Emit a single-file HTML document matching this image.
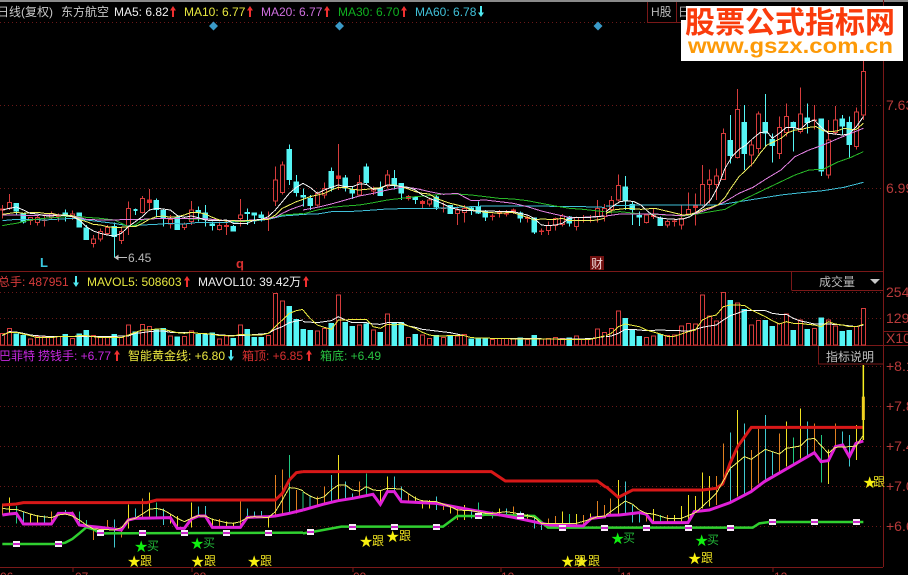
<!DOCTYPE html>
<html><head><meta charset="utf-8"><style>
html,body{margin:0;padding:0;background:#000;width:908px;height:575px;overflow:hidden}
svg{display:block;position:absolute;left:0;top:0;font-family:"Liberation Sans","Noto Sans CJK SC",sans-serif;font-size:12px}
path{vector-effect:non-scaling-stroke;fill:none}
.c path{shape-rendering:crispEdges}
.rw{stroke:#d63c3c}.rb{stroke:#d63c3c;fill:#000}.rf{stroke:#e03030;fill:#e03030}.cw{stroke:#55f5f5}.cb{stroke:#55f5f5;fill:#55f5f5;stroke-width:1.6}
.w,.y,.p,.g,.b,.vy,.vw,.Y{shape-rendering:crispEdges}
.w{stroke:#f4f4f4}.y{stroke:#f0f060}.p{stroke:#e080e0}.g{stroke:#28b828}.b{stroke:#40c0d8}
.vy{stroke:#ecec40}.vw{stroke:#f4f4f4}
.iy{stroke:#f0e020}.io{stroke:#e08020}.ic{stroke:#40c8d0}.ig{stroke:#20c880}
.R{stroke:#d81818;stroke-width:3}.M{stroke:#e020d8;stroke-width:3}.Y{stroke:#f0f060;stroke-width:1}.G{stroke:#30d030;stroke-width:2.5}
.ax{fill:#b83a3a;font-size:14px}
</style></head><body>
<svg width="908" height="575" viewBox="0 0 908 575">
<rect x="0" y="0" width="908" height="2" fill="#8a8a8a"/>
<!-- grid -->
<g stroke="#6a1818" stroke-dasharray="1 3" fill="none">
<path d="M0 22.5H883M0 105.5H883M0 188.5H883M0 292.5H883M0 318.5H883M0 366.5H883M0 406.5H883M0 446.5H883M0 486.5H883M0 526.5H883"/>
</g>
<g stroke="#7a1818" fill="none" shape-rendering="crispEdges">
<path d="M0 271.5H883M0 345.5H883M0 567.5H883M883.5 0V567M791.5 271V290M791.5 290.5H883M818.5 346V364H883M647.5 2V22M676.5 2V22M647 22.500H690M883 331.5H908M883 345.5H908M73 567V572M192 567V572M353 567V572M501 567V572M619 567V572M773 567V572"/>
</g>

<!-- main candles A -->
<g class="c" transform="translate(0,130) scale(.33333)">
<path class="rw" d="M7 225V265M28 192V240M91 265V285M112 255V287M133 258V290M154 245V268M175 250V275M217 242V270M280 315V352M301 295V335M322 285V315M364 290V342M385 215V315M427 198V250M448 177V240M511 255V295M553 278V300M574 213V285M658 275V302M679 275V315M721 207V290M805 245V303M826 110V228M847 95V193"/>
<path class="rb" d="M1 237h12V240h-12zM22 217h12V235h-12zM85 262h12V272h-12zM106 263h12V278h-12zM127 270h12V272h-12zM148 250h12V262h-12zM169 258h12V260h-12zM211 252h12V258h-12zM274 327h12V340h-12zM295 305h12V327h-12zM316 292h12V310h-12zM358 305h12V332h-12zM379 235h12V288h-12zM421 205h12V248h-12zM505 268h12V282h-12zM547 282h12V292h-12zM568 240h12V275h-12zM652 287h12V299h-12zM715 255h12V265h-12zM799 265h12V267h-12zM820 150h12V213h-12zM841 105h12V187h-12z"/>
<path class="rf" d="M442 210h12V217h-12zM673 287h12V289h-12z"/>
<path class="cw" d="M49 222V255M70 250V280M196 238V275M238 248V292M259 285V330M343 278V383M406 235V255M469 205V262M490 235V290M532 262V300M595 230V275M616 225V290M637 275V302M700 285V305M742 235V285M763 250V282M784 245V275M868 43V165M889 135V200"/>
<path class="cb" d="M43 222h12V242h-12zM64 253h12V275h-12zM190 250h12V252h-12zM232 250h12V290h-12zM253 295h12V327h-12zM337 290h12V318h-12zM400 240h12V240h-12zM463 213h12V237h-12zM484 243h12V262h-12zM526 262h12V298h-12zM589 243h12V245h-12zM610 250h12V268h-12zM631 283h12V286h-12zM694 290h12V302h-12zM736 248h12V250h-12zM757 250h12V254h-12zM778 256h12V262h-12zM862 60h12V147h-12zM883 157h12V187h-12z"/>
</g>
<!-- main candles B -->
<g class="c" transform="translate(303,130) scale(.33333)">
<path class="rw" d="M43 185V230M64 158V205M106 42V180M169 135V200M211 170V195M253 120V175M316 195V212M358 210V235M379 205V230M421 218V247M463 230V285M484 225V277M568 250V272M589 240V262M610 240V260M631 235V252M673 258V277M715 295V315M736 275V315M757 262V302M778 252V290M820 260V302M841 255V278M862 255V278M883 210V278M904 222V275"/>
<path class="rb" d="M37 190h12V225h-12zM58 175h12V195h-12zM163 157h12V195h-12zM205 178h12V183h-12zM247 135h12V168h-12zM310 200h12V205h-12zM373 210h12V222h-12zM415 235h12V236h-12zM457 240h12V250h-12zM478 235h12V247h-12zM730 287h12V302h-12zM751 265h12V287h-12zM772 258h12V283h-12zM814 262h12V290h-12zM877 235h12V260h-12zM898 235h12V260h-12z"/>
<path class="rf" d="M100 138h12V145h-12zM352 215h12V220h-12zM625 240h12V247h-12zM562 258h12V260h-12zM583 248h12V250h-12zM604 250h12V252h-12zM667 262h12V265h-12zM709 303h12V305h-12z"/>
<path class="cw" d="M1 175V230M22 195V240M85 112V185M127 135V185M148 170V207M190 100V162M232 155V198M274 120V178M295 160V210M337 198V222M400 195V240M442 225V252M505 228V255M526 215V252M547 240V273M652 245V278M694 262V312M799 258V290"/>
<path class="cb" d="M-5 197h12V200h-12zM16 207h12V225h-12zM79 125h12V173h-12zM121 145h12V173h-12zM142 180h12V188h-12zM184 112h12V157h-12zM226 175h12V195h-12zM268 147h12V165h-12zM289 162h12V188h-12zM331 202h12V207h-12zM394 202h12V230h-12zM436 228h12V250h-12zM499 235h12V238h-12zM520 232h12V248h-12zM541 245h12V260h-12zM646 250h12V263h-12zM688 265h12V305h-12zM793 262h12V278h-12z"/>
</g>
<!-- main candles C -->
<g class="c" transform="translate(606,70) scale(.33333)">
<path class="rw" d="M16 378V430M37 313V395M121 430V460M142 415V447M184 450V472M205 445V470M226 405V478M247 367V435M268 370V467M289 285V410M310 298V400M331 295V390M352 175V330M394 57V265M436 210V290M457 125V250M520 140V267M541 100V200M583 52V190M625 105V178M667 150V325M688 108V195M751 112V238M772 -30V150"/>
<path class="rb" d="M10 392h12V418h-12zM31 346h12V390h-12zM115 435h12V458h-12zM178 455h12V465h-12zM199 453h12V455h-12zM220 445h12V465h-12zM241 418h12V432h-12zM283 343h12V405h-12zM304 330h12V343h-12zM325 318h12V343h-12zM346 190h12V328h-12zM388 118h12V263h-12zM430 225h12V255h-12zM451 132h12V235h-12zM514 172h12V250h-12zM535 140h12V188h-12zM577 132h12V185h-12zM619 150h12V152h-12zM661 210h12V315h-12zM682 150h12V187h-12zM745 126h12V230h-12zM766 5h12V135h-12z"/>
<path class="rf" d="M136 432h12V440h-12zM262 405h12V412h-12z"/>
<path class="cw" d="M58 318V420M79 395V465M100 425V468M163 440V468M373 135V280M415 105V300M478 72V230M499 190V278M562 155V245M604 100V190M646 148V318M709 135V195M730 140V265"/>
<path class="cb" d="M52 352h12V392h-12zM73 405h12V418h-12zM94 438h12V440h-12zM157 445h12V465h-12zM367 212h12V255h-12zM409 158h12V250h-12zM472 158h12V188h-12zM493 210h12V225h-12zM556 158h12V172h-12zM598 145h12V156h-12zM640 148h12V302h-12zM703 148h12V167h-12zM724 158h12V222h-12z"/>
</g>
<!-- MA lines A -->
<g transform="translate(0,130) scale(.33333)">
<path class="b" d="M7 272 49 268 91 268 133 270 217 265 259 270 301 275 343 280 385 288 427 285 469 283 511 280 553 282 595 277 637 277 679 277 721 275 763 273 805 268 847 258 889 255 909 253"/>
<path class="g" d="M7 287 28 283 49 280 91 270 133 265 175 262 217 258 259 262 301 265 343 270 385 290 406 285 427 270 469 265 511 265 553 266 595 267 637 268 679 272 721 275 763 272 805 265 847 255 889 252 909 250"/>
<path class="p" d="M7 255 28 255 49 255 91 257 133 255 175 255 217 257 259 268 301 270 343 270 385 268 427 268 469 266 511 266 553 265 595 265 637 268 679 272 721 272 763 270 805 265 826 262 847 250 868 240 889 232 909 225"/>
<path class="y" d="M7 253 28 250 49 247 70 250 91 248 112 247 133 250 154 250 175 255 196 255 217 257 238 268 259 275 280 283 301 285 322 290 343 293 364 292 385 290 406 290 427 280 448 268 469 260 490 258 511 262 532 260 553 255 574 247 595 248 616 252 637 262 658 270 679 273 700 272 721 273 742 272 763 272 784 268 805 268 826 255 847 235 868 225 889 215 909 208"/>
<path class="w" d="M7 240 28 235 49 231 70 240 91 250 112 252 133 257 154 258 175 255 196 257 217 260 238 270 259 290 280 303 301 310 322 315 343 318 364 310 385 290 406 275 427 260 448 240 469 235 490 237 511 240 532 257 553 262 574 258 595 263 616 270 637 272 658 272 679 270 700 280 721 280 742 280 763 270 784 268 805 260 826 240 847 215 868 190 889 172 909 160"/>
</g>
<!-- MA lines B -->
<g transform="translate(303,130) scale(.33333)">
<path class="b" d="M0 253 43 252 85 245 127 245 169 243 211 240 253 237 295 236 337 236 400 235 463 232 505 230 547 228 631 228 715 228 778 230 841 230 904 232"/>
<path class="g" d="M0 252 43 240 85 232 127 228 169 225 211 218 253 210 295 205 337 200 379 197 421 192 463 192 505 195 547 200 589 205 631 207 673 212 715 220 757 228 799 235 841 238 904 245"/>
<path class="p" d="M0 240 43 232 85 222 127 210 169 198 211 190 253 180 295 172 337 175 379 185 421 193 463 190 505 212 547 210 589 215 631 220 673 230 715 243 757 253 799 262 841 262 904 258"/>
<path class="y" d="M0 208 21 200 43 195 64 190 85 180 106 172 127 172 148 178 169 180 190 178 211 175 232 173 253 165 274 165 295 170 316 177 337 185 358 190 379 192 400 205 421 213 442 220 463 225 484 230 505 240 526 243 547 247 568 248 589 250 610 248 631 248 652 255 673 262 694 270 715 267 736 268 757 268 778 265 799 272 820 272 841 272 862 272 883 270 904 265"/>
<path class="w" d="M0 160 21 172 43 190 64 180 85 172 106 165 127 170 148 170 169 162 190 163 211 178 232 175 253 165 274 167 295 170 316 172 337 180 358 195 379 205 400 213 421 222 442 233 463 238 484 242 505 242 526 243 547 243 568 243 589 245 610 245 631 245 652 250 673 255 694 265 715 285 736 287 757 285 778 280 799 265 820 262 841 262 862 262 883 260 904 258"/>
</g>
<!-- MA lines C -->
<g transform="translate(606,70) scale(.33333)">
<path class="b" d="M0 408 105 405 189 405 273 405 336 405 399 395 462 385 525 375 588 368 651 362 714 352 772 337"/>
<path class="g" d="M0 428 42 425 105 432 189 435 231 438 273 432 315 425 357 418 399 395 441 375 483 355 525 335 567 315 609 300 651 298 693 277 735 262 772 245"/>
<path class="p" d="M0 438 42 432 105 432 147 432 189 435 231 437 273 430 315 415 357 395 399 370 441 352 483 325 525 300 567 260 609 240 651 225 693 207 735 190 772 175"/>
<path class="y" d="M0 430 21 420 63 415 105 418 147 415 189 425 231 435 252 433 273 427 294 418 315 412 336 405 357 382 378 350 399 320 420 300 441 280 462 250 483 225 504 215 525 205 546 188 567 180 588 178 609 172 630 170 651 182 672 185 693 183 714 175 735 178 751 178 772 160"/>
<path class="w" d="M0 425 21 408 42 395 63 392 84 395 105 405 126 425 147 440 168 445 189 447 210 448 231 447 252 440 273 425 294 410 315 388 336 350 357 295 378 260 399 238 420 225 441 205 462 188 483 185 499 205 520 190 541 172 562 172 583 178 604 158 625 150 646 172 667 190 688 192 709 195 730 192 751 170 772 140"/>
</g>
<path d="M115 257.5H127" stroke="#c0c0c0"/>
<path d="M115 257.5l3-2v4z" stroke="#c0c0c0" style="fill:#c0c0c0"/>
<text x="128" y="262" fill="#b8b8b8" font-size="12">6.45</text>
<text x="40" y="267" fill="#38c8e0" font-size="13" font-weight="bold">L</text>
<text x="236" y="268" fill="#d83030" font-size="13" font-weight="bold">q</text>
<rect x="590" y="256" width="14" height="14" fill="#701010"/>
<text x="591" y="268" fill="#f0d8d8" font-size="12">财</text>
<path d="M213.5 21.500l4.500 4.500-4.500 4.500-4.500-4.500zM339.500 21.500l4.500 4.500-4.500 4.500-4.500-4.500zM598 21.500l4.500 4.500-4.500 4.500-4.500-4.500z" style="fill:#3a9ac8"/>

<!-- Volume A -->
<g class="c" transform="translate(0,270) scale(.33333)">
<path class="rb" d="M1 190h12V225h-12zM22 175h12V225h-12zM85 207h12V225h-12zM106 200h12V225h-12zM127 200h12V225h-12zM148 200h12V225h-12zM169 200h12V225h-12zM211 205h12V225h-12zM274 197h12V225h-12zM295 202h12V225h-12zM316 203h12V225h-12zM358 203h12V225h-12zM379 165h12V225h-12zM421 163h12V225h-12zM442 170h12V225h-12zM505 198h12V225h-12zM547 200h12V225h-12zM568 183h12V225h-12zM652 207h12V225h-12zM673 198h12V225h-12zM715 165h12V225h-12zM799 197h12V225h-12zM820 70h12V225h-12zM841 93h12V225h-12z"/>
<path class="cb" d="M43 193h12V225h-12zM64 197h12V225h-12zM190 195h12V225h-12zM232 193h12V225h-12zM253 183h12V225h-12zM337 195h12V225h-12zM400 187h12V225h-12zM463 180h12V225h-12zM484 177h12V225h-12zM526 202h12V225h-12zM589 195h12V225h-12zM610 195h12V225h-12zM631 190h12V225h-12zM694 207h12V225h-12zM736 180h12V225h-12zM757 203h12V225h-12zM778 203h12V225h-12zM862 110h12V225h-12zM883 150h12V225h-12z"/>
</g>
<g class="c" transform="translate(303,270) scale(.33333)">
<path class="rb" d="M37 183h12V225h-12zM58 175h12V225h-12zM100 75h12V225h-12zM163 165h12V225h-12zM205 180h12V225h-12zM247 132h12V225h-12zM310 202h12V225h-12zM352 195h12V225h-12zM373 205h12V225h-12zM415 203h12V225h-12zM457 198h12V225h-12zM478 193h12V225h-12zM562 208h12V225h-12zM583 205h12V225h-12zM604 205h12V225h-12zM625 207h12V225h-12zM667 209h12V225h-12zM709 207h12V225h-12zM730 205h12V225h-12zM751 202h12V225h-12zM772 205h12V225h-12zM814 198h12V225h-12zM835 209h12V225h-12zM856 206h12V225h-12zM877 177h12V225h-12zM898 187h12V225h-12z"/>
<path class="cb" d="M-5 180h12V225h-12zM16 183h12V225h-12zM79 162h12V225h-12zM121 158h12V225h-12zM142 170h12V225h-12zM184 163h12V225h-12zM226 188h12V225h-12zM268 158h12V225h-12zM289 158h12V225h-12zM331 195h12V225h-12zM394 197h12V225h-12zM436 197h12V225h-12zM499 208h12V225h-12zM520 207h12V225h-12zM541 207h12V225h-12zM646 205h12V225h-12zM688 198h12V225h-12zM793 205h12V225h-12z"/>
</g>
<g class="c" transform="translate(606,270) scale(.33333)">
<path class="rb" d="M10 175h12V225h-12zM31 123h12V225h-12zM115 203h12V225h-12zM136 198h12V225h-12zM178 197h12V225h-12zM199 195h12V225h-12zM220 168h12V225h-12zM241 160h12V225h-12zM262 162h12V225h-12zM283 75h12V225h-12zM304 138h12V225h-12zM325 153h12V225h-12zM346 67h12V225h-12zM388 99h12V225h-12zM430 165h12V225h-12zM451 152h12V225h-12zM514 160h12V225h-12zM535 132h12V225h-12zM577 150h12V225h-12zM619 175h12V225h-12zM661 150h12V225h-12zM682 168h12V225h-12zM745 170h12V225h-12zM766 115h12V225h-12z"/>
<path class="cb" d="M52 147h12V225h-12zM73 182h12V225h-12zM94 201h12V225h-12zM157 195h12V225h-12zM367 93h12V225h-12zM409 120h12V225h-12zM472 152h12V225h-12zM493 170h12V225h-12zM556 182h12V225h-12zM598 180h12V225h-12zM640 145h12V225h-12zM703 186h12V225h-12zM724 183h12V225h-12z"/>
</g>
<g transform="translate(0,270) scale(.33333)">
<path class="vw" d="M7 197 28 185 49 186 70 190 91 195 112 197 154 200 300 200 385 198 406 190 427 188 448 185 469 183 490 183 511 187 574 187 595 190 679 196 721 197 784 192 805 190 826 178 847 170 868 158 889 153 909 150"/>
<path class="vy" d="M7 195 28 187 49 187 70 192 91 197 112 203 154 203 175 200 217 200 238 197 259 197 280 200 301 203 364 203 385 195 406 187 427 180 448 180 469 177 490 178 511 183 532 188 553 190 574 187 595 190 637 192 658 197 679 197 700 198 721 193 742 195 784 195 805 190 826 170 847 150 868 130 889 122 909 118"/>
</g>
<g transform="translate(303,270) scale(.33333)">
<path class="vw" d="M0 155 43 158 85 152 106 140 127 150 148 158 190 158 211 162 232 163 253 158 295 158 316 168 337 172 358 178 400 183 442 188 484 197 505 203 568 205 799 207 862 206 904 200"/>
<path class="vy" d="M0 120 21 145 43 165 64 172 85 178 106 150 127 150 148 148 190 148 211 170 232 175 253 163 274 165 295 162 316 168 337 175 358 187 379 195 400 198 442 197 484 197 505 203 568 205 652 207 799 208 862 208 904 198"/>
</g>
<g transform="translate(606,270) scale(.33333)">
<path class="vw" d="M0 200 16 198 37 190 58 178 79 178 121 182 163 180 184 181 247 183 268 178 289 172 310 168 331 165 352 150 373 137 394 130 415 122 478 122 499 130 520 133 541 133 562 145 583 153 604 157 625 162 667 162 709 165 751 170 772 165"/>
<path class="vy" d="M0 197 16 190 37 170 58 162 100 170 121 180 163 192 184 199 205 199 247 185 268 180 289 150 310 140 331 135 352 110 373 105 415 106 436 120 457 130 478 140 499 152 520 162 541 155 562 160 583 160 604 163 625 165 646 170 667 155 688 162 709 165 730 170 751 170 772 163"/>
</g>

<!-- Indicator A -->
<g transform="translate(0,440) scale(.33333)">
<g class="c">
<path class="iy" d="M28 172V222M91 222V250M112 225V250M385 193V265M448 158V235M511 222V250M532 228V265M574 187V262M637 235V262M679 245V260M700 248V260M805 233V262"/>
<path class="io" d="M7 190V225M154 215V252M217 215V220M280 270V300M322 240V265M364 268V292M427 175V235M658 237V262M721 183V262M826 105V225M847 88V225M889 150V220"/>
<path class="ic" d="M70 215V252M133 227V250M196 210V220M343 238V323M406 205V235M490 205V255M595 200V228M616 198V228M742 205V232M763 215V230M784 213V230"/>
<path class="ig" d="M49 198V250M238 215V255M259 240V255M469 187V230M868 45V220"/>
</g>
<path class="R" d="M7 195 49 192 70 188 215 188 440 188 470 180 826 180 847 160 868 120 889 98 909 95"/>
<path class="G" d="M7 312 175 312 196 308 217 297 238 280 259 262 280 268 301 280 909 278"/>
<path class="M" d="M7 225 28 222 49 220 70 252 154 252 175 220 217 220 238 255 259 258 301 262 364 270 385 240 406 235 511 233 532 265 553 265 574 237 595 228 616 228 637 262 721 262 742 232 805 230 826 228 868 220 909 210"/>
<path class="Y" d="M7 205 28 208 49 208 70 215 91 222 112 228 154 233 175 225 196 222 217 228 238 240 259 255 280 267 301 268 343 270 364 263 385 240 406 235 427 222 448 208 469 205 490 210 511 222 532 235 553 245 574 235 595 227 616 228 637 238 658 243 679 248 700 250 721 245 742 233 763 230 805 233 826 215 847 180 868 143 889 145 909 152"/>
</g>
<g transform="translate(303,440) scale(.33333)">
<g class="c">
<path class="iy" d="M106 45V180M232 150V190M253 110V155M337 170V188M358 180V205M379 180V205M442 195V220M484 195V240M589 205V230M673 222V235M778 215V258M820 222V258M862 220V240"/>
<path class="io" d="M43 170V200M64 140V195M169 125V170M316 160V185M421 190V210M463 205V240M631 200V230M736 235V255M757 228V255M841 225V258M883 183V230M904 195V230"/>
<path class="ic" d="M21 165V205M85 105V185M127 125V178M148 160V178M274 110V155M295 140V185M400 170V210M505 205V235M610 205V230M652 215V235M694 225V265M715 250V270"/>
<path class="ig" d="M0 155V210M190 100V165M526 188V235M568 215V235M799 222V258"/>
</g>
<path class="R" d="M0 95 565 95 607 123 883 123 909 142"/>
<path class="G" d="M0 280 50 272 115 260 420 260 463 228 525 228 547 224 694 228 735 263 909 263"/>
<path class="M" d="M0 210 60 193 105 182 150 175 210 163 232 193 253 155 274 155 295 185 400 190 505 210 565 220 630 232 715 250 740 255 840 258 865 235 909 230"/>
<path class="Y" d="M0 155 21 168 43 177 64 170 85 150 106 135 127 135 148 150 169 153 190 140 211 150 232 152 253 145 295 147 337 175 358 183 400 185 442 200 463 210 505 212 548 220 568 220 610 215 652 222 694 232 715 250 736 250 778 250 820 250 862 238 883 230 909 228"/>
</g>
<g transform="translate(606,360) scale(.33333)">
<g class="c">
<path class="iy" d="M37 360V465M142 447V488M205 465V488M226 438V488M247 405V488M268 408V455M289 337V445M310 348V440M394 150V410M541 185V320M583 145V295M667 268V372M751 195V300"/>
<path class="io" d="M14 415V465M121 460V485M184 465V488M331 348V435M352 250V370M436 270V390M457 207V370M520 220V335M625 190V280M688 190V258"/>
<path class="ic" d="M58 365V460M79 435V488M100 460V488M373 218V425M415 190V400M478 165V360M499 275V345M604 185V290M709 215V258M730 225V320"/>
<path class="ig" d="M163 465V488M562 232V310M646 225V367"/>
</g>
<path class="R" d="M0 380 37 412 80 390 290 390 330 385 350 372 372 310 395 260 436 202 770 202"/>
<path class="G" d="M0 503 440 503 460 490 490 486 772 486"/>
<path class="M" d="M0 466 40 465 100 458 120 462 140 488 246 488 265 455 310 450 372 428 435 395 475 365 625 278 645 305 667 302 688 260 710 255 730 290 750 250 772 243"/>
<path class="Y" d="M0 465 21 450 58 423 80 433 100 450 121 460 142 462 184 475 226 475 268 458 289 440 331 400 373 325 415 290 436 298 478 268 520 282 541 265 583 258 604 238 625 235 667 280 688 262 730 260 751 258 772 225"/>
<path d="M772 15V240" stroke="#f8f020" stroke-width="1.5"/>
<path d="M772 110V180" stroke="#f0d020" stroke-width="3"/>
</g>
<!-- markers -->
<g shape-rendering="crispEdges">
<g fill="#f8ecf8"><rect x="13" y="541" width="7" height="6"/><rect x="55" y="541" width="7" height="6"/><rect x="97" y="530" width="7" height="6"/><rect x="139" y="530" width="7" height="6"/><rect x="181" y="530" width="7" height="6"/><rect x="223" y="530" width="7" height="6"/><rect x="265" y="530" width="7" height="6"/><rect x="307" y="529" width="7" height="6"/><rect x="349" y="524" width="7" height="6"/><rect x="391" y="524" width="7" height="6"/><rect x="433" y="524" width="7" height="6"/><rect x="475" y="513" width="7" height="6"/><rect x="517" y="513" width="7" height="6"/><rect x="559" y="525" width="7" height="6"/><rect x="601" y="525" width="7" height="6"/><rect x="643" y="525" width="7" height="6"/><rect x="685" y="525" width="7" height="6"/><rect x="727" y="525" width="7" height="6"/><rect x="769" y="519" width="7" height="6"/><rect x="811" y="519" width="7" height="6"/><rect x="853" y="519" width="7" height="6"/></g>
<path stroke-width="2" d="M13 544H20M55 544H62M97 533H104M139 533H146M181 533H188M223 533H230M265 533H272M307 532H314M349 527H356M391 527H398M433 527H440M475 516H482M517 516H524M559 528H566M601 528H608M643 528H650M685 528H692M727 528H734M769 522H776M811 522H818M853 522H860" stroke="#c828c8"/>
</g>
<!-- stars -->
<g font-size="16" style="font-family:'DejaVu Sans',sans-serif" fill="#10f010">
<text x="134" y="552">★</text><text x="190" y="549">★</text><text x="610.500" y="544">★</text><text x="694.500" y="546">★</text>
</g>
<g fill="#22b838" font-size="12"><text x="147" y="550">买</text><text x="203" y="547">买</text><text x="623" y="542">买</text><text x="707" y="544">买</text></g>
<g font-size="16" style="font-family:'DejaVu Sans',sans-serif" fill="#f8f010">
<text x="127" y="567">★</text><text x="190.500" y="567">★</text><text x="247" y="567">★</text><text x="359" y="547">★</text><text x="385.500" y="542">★</text><text x="560.500" y="567">★</text><text x="574.500" y="567">★</text><text x="687.500" y="564">★</text><text x="862.500" y="488">★</text>
</g>
<g fill="#ece020" font-size="12"><text x="140" y="565">跟</text><text x="204" y="565">跟</text><text x="260" y="565">跟</text><text x="372" y="545">跟</text><text x="399" y="540">跟</text><text x="574" y="565">跟</text><text x="588" y="565">跟</text><text x="701" y="562">跟</text><text x="873" y="486">跟</text></g>

<!-- titles -->
<text x="-3" y="16" fill="#c8c8c8">日线(复权)</text><text x="61" y="16" fill="#c8c8c8">东方航空</text>
<text x="114" y="16" fill="#f0f0f0">MA5: 6.82</text>
<text x="184" y="16" fill="#e8e840">MA10: 6.77</text>
<text x="261" y="16" fill="#d070e0">MA20: 6.77</text>
<text x="338" y="16" fill="#10b020">MA30: 6.70</text>
<text x="415" y="16" fill="#40c0d8">MA60: 6.78</text>
<path style="fill:#f03030" d="M173 6l3 4.500h-2v6.500h-2v-6.500h-2zM250 6l3 4.500h-2v6.500h-2v-6.500h-2zM327 6l3 4.500h-2v6.500h-2v-6.500h-2zM404 6l3 4.500h-2v6.500h-2v-6.500h-2zM187 276l3 4.500h-2v6.500h-2v-6.500h-2zM306 276l3 4.500h-2v6.500h-2v-6.500h-2zM117 350l3 4.500h-2v6.500h-2v-6.500h-2zM309 350l3 4.500h-2v6.500h-2v-6.500h-2z"/>
<path style="fill:#50e8f0" d="M481 17l3-4.500h-2v-6.500h-2v6.500h-2zM76 287l3-4.500h-2v-6.500h-2v6.500h-2zM231 361l3-4.500h-2v-6.500h-2v6.500h-2z"/>
<text x="-2" y="286" fill="#d83c3c">总手: 487951</text>
<text x="87" y="286" fill="#e8e840">MAVOL5: 508603</text>
<text x="198" y="286" fill="#f0f0f0">MAVOL10: 39.42万</text>
<text x="-1" y="360" fill="#c828e0">巴菲特</text><text x="38" y="360" fill="#c828e0">捞钱手: +6.77</text>
<text x="128" y="360" fill="#ece840">智能黄金线: +6.80</text>
<text x="242" y="360" fill="#d83030">箱顶: +6.85</text>
<text x="320" y="360" fill="#28c040">箱底: +6.49</text>
<text x="819" y="286" fill="#b8b8b8">成交量</text>
<path d="M870 279h10l-5 5z" style="fill:#c8c8c8"/>
<text x="826" y="361" fill="#c0c0c0">指标说明</text>
<text x="651" y="16" fill="#b8b8b8">H股</text>
<text x="678" y="16" fill="#b8b8b8">日</text>
<!-- axis -->
<g class="ax">
<text x="886" y="110">7.63</text><text x="886" y="193">6.99</text>
<text x="886" y="297">254</text><text x="886" y="323">129-</text><text x="886" y="343">X100</text>
<text x="886" y="371">+8.1</text><text x="886" y="411">+7.8</text><text x="886" y="451">+7.4</text><text x="886" y="491">+7.0</text><text x="886" y="531">+6.6</text>
</g>
<g fill="#b83a3a" font-size="12"><text x="0" y="581">06</text><text x="75" y="581">07</text><text x="193" y="581">08</text><text x="353" y="581">09</text><text x="501" y="581">10</text><text x="620" y="581">11</text><text x="774" y="581">12</text></g>

<!-- logo -->
<path d="M686 6H903V61H681V20H686z" style="fill:#fff"/>
<text x="685" y="33" fill="#fa3c0c" style="font-size:30px;font-weight:bold;font-family:'Noto Sans CJK SC',sans-serif">股票公式指标网</text>
<text x="688" y="53" fill="#fd9a08" textLength="205" lengthAdjust="spacingAndGlyphs" style="font-size:21px;font-weight:bold">www.gszx.com.cn</text>
</svg>
</body></html>
